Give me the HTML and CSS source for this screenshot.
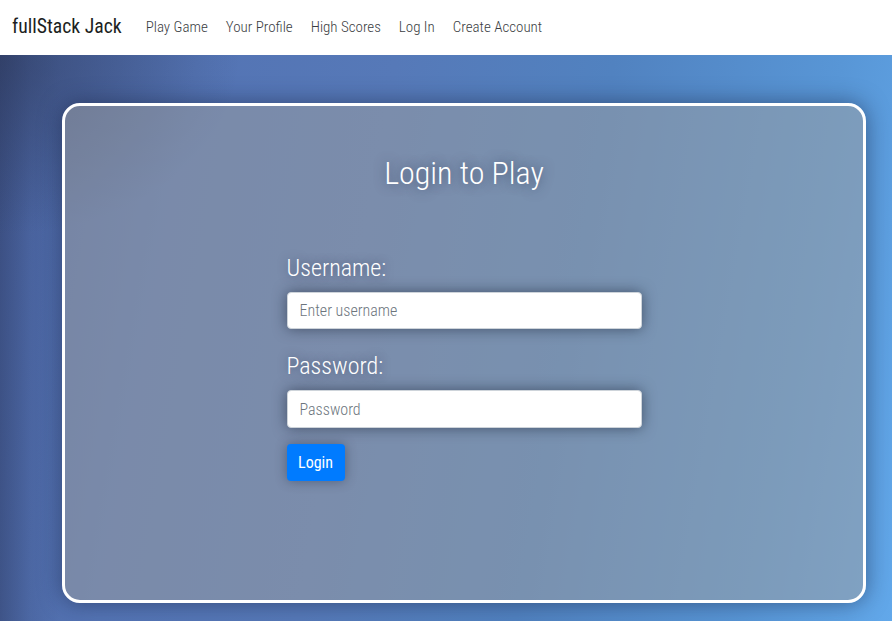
FILE: index.html
```
<!DOCTYPE html>
<html lang="en">
<head>
<meta charset="utf-8">
<title>fullStack Jack</title>
<link rel="stylesheet" href="styles.css">
</head>
<body>
<nav class="navbar">
  <a class="brand" href="#">fullStack Jack</a>
  <ul class="nav-links">
    <li><a href="#">Play Game</a></li>
    <li><a href="#">Your Profile</a></li>
    <li><a href="#">High Scores</a></li>
    <li><a href="#">Log In</a></li>
    <li><a href="#">Create Account</a></li>
  </ul>
</nav>
<main class="stage">
  <section class="card">
    <h1 class="title">Login to Play</h1>
    <form class="login-form">
      <label class="field-label" for="username">Username:</label>
      <input class="field-input" id="username" type="text" placeholder="Enter username">
      <label class="field-label" for="password">Password:</label>
      <input class="field-input field-last" id="password" type="password" placeholder="Password">
      <button class="btn-login" type="button">Login</button>
    </form>
  </section>
</main>
</body>
</html>
```
FILE: styles.css
```
*{box-sizing:border-box}
html,body{margin:0;height:100%}
body{
  font-family:"Roboto Condensed","Open Sans",sans-serif;
  font-weight:300;
  display:flex;
  flex-direction:column;
  overflow:hidden;
}
.navbar{
  height:55px;
  flex:none;
  background:#fff;
  display:flex;
  align-items:center;
  padding:0 12px 2px;
}
.brand{
  font-size:19.7px;
  font-weight:400;
  color:#1d1f22;
  text-decoration:none;
  margin-right:24px;
}
.nav-links{
  list-style:none;
  margin:0;
  padding:0;
  display:flex;
  gap:18px;
}
.nav-links a{
  font-size:15px;
  color:#3a3d42;
  text-decoration:none;
}
.stage{
  flex:1;
  padding:48px 26px 18px 62px;
  background:
    radial-gradient(ellipse 240px 180px at 0% 0%, rgba(40,50,80,0.5), rgba(40,50,80,0) 100%),
    linear-gradient(90deg, rgba(35,45,80,0.38) 0px, rgba(35,45,80,0.1) 30px, rgba(35,45,80,0) 60px),
    linear-gradient(100deg, #4a63a0 0%, #5474b4 20%, #5679b8 40%, #5182c0 62%, #5896d6 85%, #62a8ea 100%);
}
.card{
  width:804px;
  height:500px;
  border:3px solid #fff;
  border-radius:18px;
  background:rgba(158,160,162,0.52);
  box-shadow:0 0 22px rgba(20,30,60,0.5);
  display:flex;
  flex-direction:column;
  align-items:center;
  padding-top:47px;
}
.title{
  margin:0;
  font-size:32px;
  font-weight:300;
  color:#fff;
  line-height:40px;
  text-shadow:0 0 12px rgba(40,50,80,0.7);
}
.login-form{
  width:355px;
  margin-top:60px;
  display:flex;
  flex-direction:column;
  align-items:flex-start;
}
.field-label{
  font-size:24px;
  line-height:30px;
  color:#fff;
  margin-bottom:9px;
  text-shadow:0 0 10px rgba(40,50,80,0.6);
}
.field-input{
  width:100%;
  height:37px;
  border:1px solid #ced4da;
  border-radius:4px;
  background:#fff;
  padding:0 12px;
  font-family:inherit;
  font-weight:300;
  font-size:16px;
  color:#495057;
  box-shadow:0 0 14px rgba(30,40,60,0.6);
  margin-bottom:22px;
}
.field-input::placeholder{color:#6c757d}
.field-last{height:38px;margin-bottom:16px}
.btn-login{
  height:37px;
  width:58px;
  border:none;
  border-radius:4px;
  background:#007bff;
  color:#fff;
  font-family:inherit;
  font-weight:400;
  font-size:16px;
  box-shadow:0 0 12px rgba(30,40,60,0.45);
  padding:0;
}
```
